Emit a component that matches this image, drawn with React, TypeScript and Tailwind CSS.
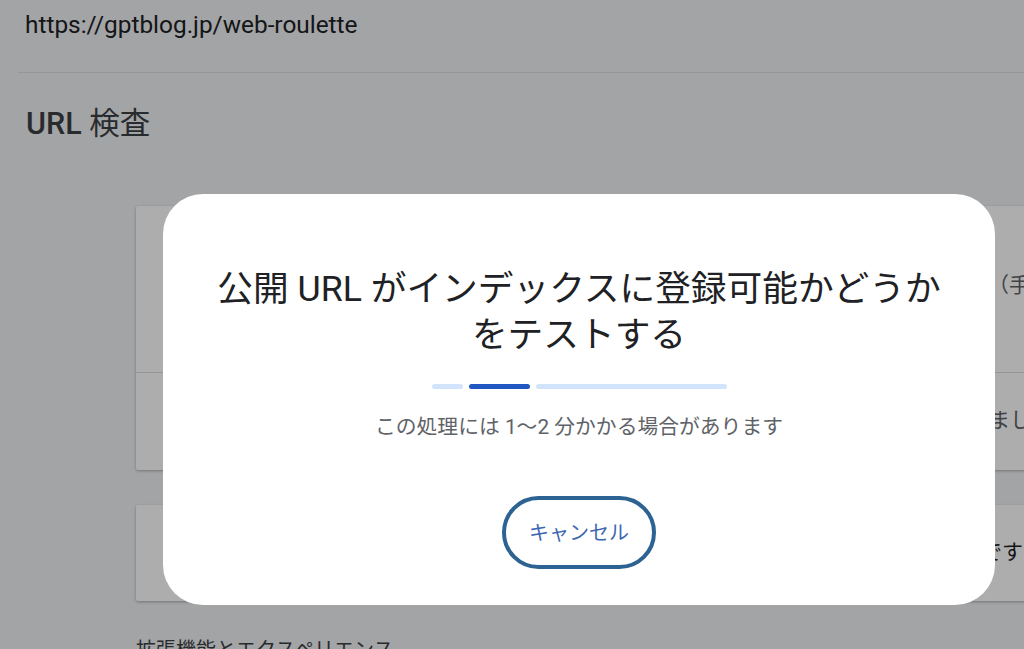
const sans = "font-['Roboto','Noto_Sans_CJK_JP',sans-serif]";

function ProgressBar() {
  return (
    <div className="flex items-center justify-center gap-[6px]">
      <div className="h-[5px] w-[31px] rounded-full bg-[#d2e3fc]" />
      <div className="h-[5px] w-[61px] rounded-full bg-[#1f58c2]" />
      <div className="h-[5px] w-[191px] rounded-full bg-[#d2e3fc]" />
    </div>
  );
}

function InspectDialog() {
  return (
    <div className="ml-[163px] mt-[194px] flex w-[832px] flex-col items-center rounded-[40px] bg-white pt-[72px] pb-[36px]">
      <h2 className="text-center text-[35.7px] leading-[46px] text-[#202124]">
        公開 URL がインデックスに登録可能かどうか
        <br />
        をテストする
      </h2>
      <div className="mt-[26px]">
        <ProgressBar />
      </div>
      <p className="mt-[24px] text-[20.8px] leading-[28px] text-[#5f6368]">
        この処理には 1〜2 分かかる場合があります
      </p>
      <button className="mt-[55px] flex h-[73px] w-[154px] items-center justify-center rounded-full border-[4px] border-[#2c6392] text-[20px] text-[#3d67b3]">
        キャンセル
      </button>
    </div>
  );
}

export default function App() {
  return (
    <div className={`relative h-[649px] w-[1024px] overflow-hidden bg-[#f0f2f5] ${sans}`}>
      <div className="flex h-[51px] items-center pl-[25px]">
        <span className="text-[24.4px] text-[#202124]">https://gptblog.jp/web-roulette</span>
      </div>
      <div className="ml-[18px] mt-[21px] border-b border-[#dadce0]" />
      <h1 className="mt-[30px] pl-[26px] text-[30.5px] leading-[42px] text-[#3c4043]">
        <span className="font-medium">URL</span> 検査
      </h1>

      <div className="mt-[61px] pl-[136px]">
        <div className="w-[1000px] rounded-[2px] bg-white shadow-[0_1px_3px_rgba(0,0,0,0.3)]">
          <div className="flex h-[167px] items-center border-b border-[#dadce0] pl-[852px] pb-[6px]">
            <span className="text-[21px] text-[#5f6368]">（手動</span>
          </div>
          <div className="flex h-[97px] items-center pl-[853px] pb-[2px]">
            <span className="text-[21px] text-[#5f6368]">ました</span>
          </div>
        </div>
        <div className="mt-[35px] w-[1000px] rounded-[2px] bg-white shadow-[0_1px_3px_rgba(0,0,0,0.3)]">
          <div className="flex h-[96px] items-center pl-[824px]">
            <span className="text-[21px] text-[#202124]">ルです</span>
          </div>
        </div>
        <p className="mt-[35px] text-[20px] leading-[28px] text-[#3c4043]">拡張機能とエクスペリエンス</p>
      </div>

      <div className="absolute inset-0 bg-black/[0.32]">
        <InspectDialog />
      </div>
    </div>
  );
}
